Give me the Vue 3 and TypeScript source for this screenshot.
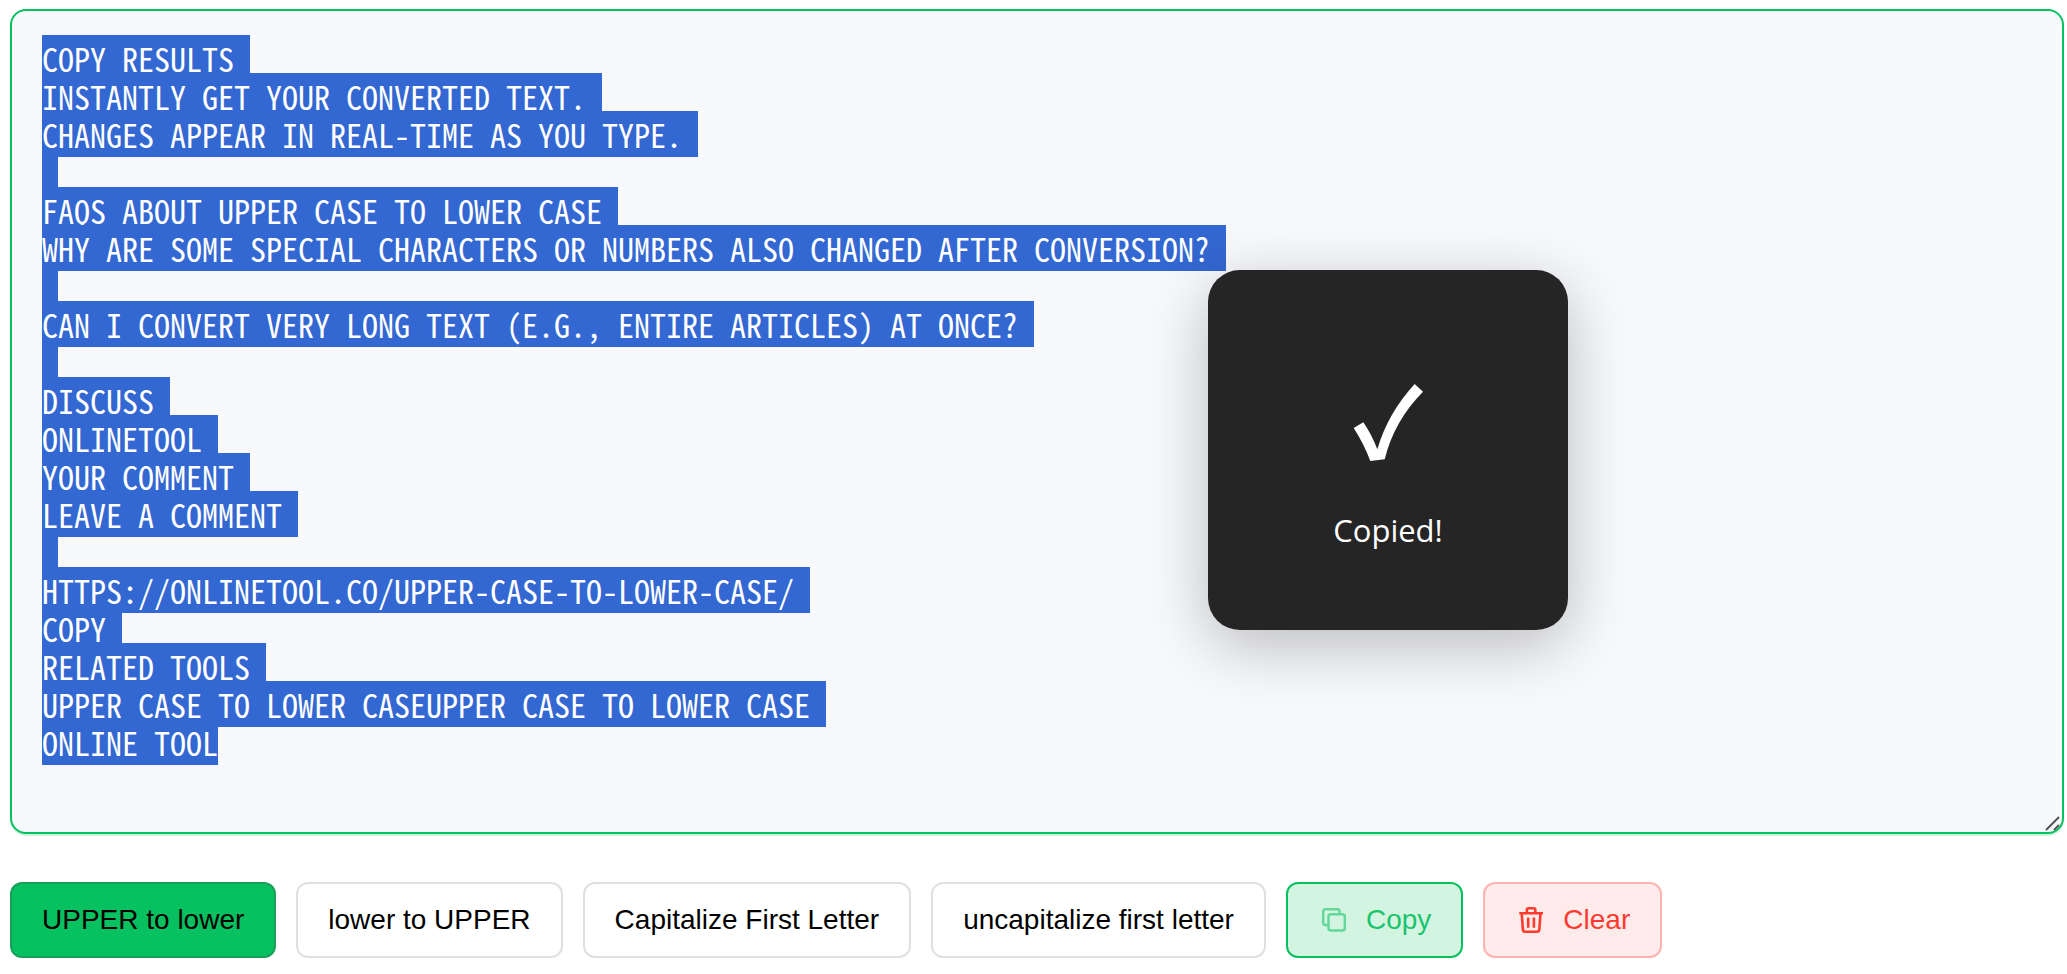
<script setup lang="ts">
import { onMounted, ref } from 'vue'

type Mode = 'lower' | 'upper' | 'capitalize' | 'uncapitalize'

const modes: { id: Mode; label: string }[] = [
  { id: 'lower', label: 'UPPER to lower' },
  { id: 'upper', label: 'lower to UPPER' },
  { id: 'capitalize', label: 'Capitalize First Letter' },
  { id: 'uncapitalize', label: 'uncapitalize first letter' },
]

const text = ref(
  [
    'COPY RESULTS',
    'INSTANTLY GET YOUR CONVERTED TEXT.',
    'CHANGES APPEAR IN REAL-TIME AS YOU TYPE.',
    '',
    'FAQS ABOUT UPPER CASE TO LOWER CASE',
    'WHY ARE SOME SPECIAL CHARACTERS OR NUMBERS ALSO CHANGED AFTER CONVERSION?',
    '',
    'CAN I CONVERT VERY LONG TEXT (E.G., ENTIRE ARTICLES) AT ONCE?',
    '',
    'DISCUSS',
    'ONLINETOOL',
    'YOUR COMMENT',
    'LEAVE A COMMENT',
    '',
    'HTTPS://ONLINETOOL.CO/UPPER-CASE-TO-LOWER-CASE/',
    'COPY',
    'RELATED TOOLS',
    'UPPER CASE TO LOWER CASEUPPER CASE TO LOWER CASE',
    'ONLINE TOOL',
  ].join('\n'),
)
const active = ref<Mode>('lower')
const copied = ref(true)
const field = ref<HTMLTextAreaElement | null>(null)

function selectAll() {
  field.value?.focus({ preventScroll: true })
  field.value?.select()
}

function convert(mode: Mode) {
  active.value = mode
  copied.value = false
  if (mode === 'lower') text.value = text.value.toLowerCase()
  else if (mode === 'upper') text.value = text.value.toUpperCase()
  else if (mode === 'capitalize') text.value = text.value.replace(/\b[a-z]/g, (c) => c.toUpperCase())
  else text.value = text.value.replace(/\b[A-Z]/g, (c) => c.toLowerCase())
}

function copy() {
  selectAll()
  navigator.clipboard?.writeText(text.value)
  copied.value = true
}

function clear() {
  text.value = ''
  copied.value = false
}

onMounted(selectAll)
</script>

<template>
  <main class="converter">
    <div class="editor">
      <textarea ref="field" v-model="text" class="field" aria-label="Text to convert" spellcheck="false"></textarea>
      <svg class="grip" viewBox="0 0 16 16" fill="none" stroke="#555" stroke-width="2" aria-hidden="true">
        <path d="M1 14L14 1M9 14L14 9" />
      </svg>
    </div>

    <div class="actions">
      <button
        v-for="mode in modes"
        :key="mode.id"
        type="button"
        class="button"
        :class="{ active: active === mode.id }"
        @click="convert(mode.id)"
      >
        {{ mode.label }}
      </button>
      <button type="button" class="button copy" @click="copy">
        <svg class="icon faded" viewBox="0 0 28 28" fill="none" stroke="currentColor" stroke-width="2.500" aria-hidden="true">
          <rect x="8.500" y="8.300" width="16.300" height="16.300" rx="2.500" />
          <path d="M8 19H5.500a2.300 2.300 0 0 1-2.300-2.300V5.500a2.300 2.300 0 0 1 2.300-2.300h11.700a2.300 2.300 0 0 1 2.300 2.300v2.500" />
        </svg>
        Copy
      </button>
      <button type="button" class="button clear" @click="clear">
        <svg class="icon" viewBox="0 0 28 28" fill="none" stroke="currentColor" stroke-width="2.600" aria-hidden="true">
          <path d="M2.300 7.300h23.700M9.900 7V3.800a1.500 1.500 0 0 1 1.500-1.500h5.400a1.500 1.500 0 0 1 1.500 1.500V7M4.700 7.300l1.200 16.400a2.200 2.200 0 0 0 2.200 2h12a2.200 2.200 0 0 0 2.200-2l1.200-16.400M11.200 11.500v10.200M16.900 11.500v10.200" />
        </svg>
        Clear
      </button>
    </div>

    <div v-if="copied" class="toast" role="status">
      <svg class="check" viewBox="0 0 70 78" fill="#fff" aria-hidden="true">
        <path d="M.7 44L10.300 38.300Q19 51 24.300 65.300Q35 29 61.700 0L70 7.700Q41 37 31.700 75.300L17.300 77Q11 60 .7 44Z" />
      </svg>
      <span>Copied!</span>
    </div>
  </main>
</template>

<style>
body {
  margin: 0;
  background: #fff;
}
</style>

<style scoped>
.converter {
  position: relative;
  padding: 9px 3px 16px 10px;
  font-family: 'Liberation Sans', Arial, sans-serif;
}

.editor {
  position: relative;
}

.field {
  display: block;
  box-sizing: border-box;
  width: 100%;
  height: 825px;
  padding: 28px 30px;
  border: 2px solid #07c160;
  border-radius: 16px;
  outline: none;
  background: #f8f9fc;
  box-shadow: 0 2px 0 rgba(7, 193, 96, 0.2);
  color: #333;
  font-family: 'Noto Sans Mono CJK SC', 'Liberation Mono', monospace;
  font-size: 32px;
  line-height: 38px;
  resize: vertical;
}

.field::selection {
  background: #3367d1;
  color: #fff;
}

.field::-webkit-resizer {
  background: transparent;
}

.grip {
  position: absolute;
  right: 3px;
  bottom: 2px;
  width: 16px;
  height: 16px;
  pointer-events: none;
}

.actions {
  display: flex;
  flex-wrap: wrap;
  gap: 20px;
  margin-top: 48px;
}

.button {
  display: flex;
  align-items: center;
  padding: 20px 30px;
  border: 2px solid #e0e0e0;
  border-radius: 12px;
  background: #fff;
  color: #000;
  font-family: inherit;
  font-size: 28px;
  line-height: 32px;
  cursor: pointer;
}

.button.active {
  border-color: #18a058;
  background: #07c160;
}

.button.copy {
  border-color: #07c160;
  background: #d4f4e2;
  color: #1bc46c;
}

.button.clear {
  border-color: #ffb3af;
  background: #ffebea;
  color: #ff3b30;
}

.icon {
  width: 28px;
  height: 28px;
  margin: 0 18px 0 2px;
}

.faded {
  opacity: 0.6;
}

.toast {
  position: absolute;
  top: 270px;
  left: 1208px;
  box-sizing: border-box;
  width: 360px;
  height: 360px;
  padding-top: 114px;
  border-radius: 32px;
  background: #252525;
  box-shadow: 0 16px 64px rgba(0, 0, 0, 0.25);
  color: #fff;
  font-family: 'Segoe UI', 'Open Sans', 'Noto Sans', sans-serif;
  font-size: 31px;
  line-height: 48px;
  display: flex;
  flex-direction: column;
  align-items: center;
  gap: 44px;
}

.check {
  width: 70px;
  height: 78px;
}
</style>
